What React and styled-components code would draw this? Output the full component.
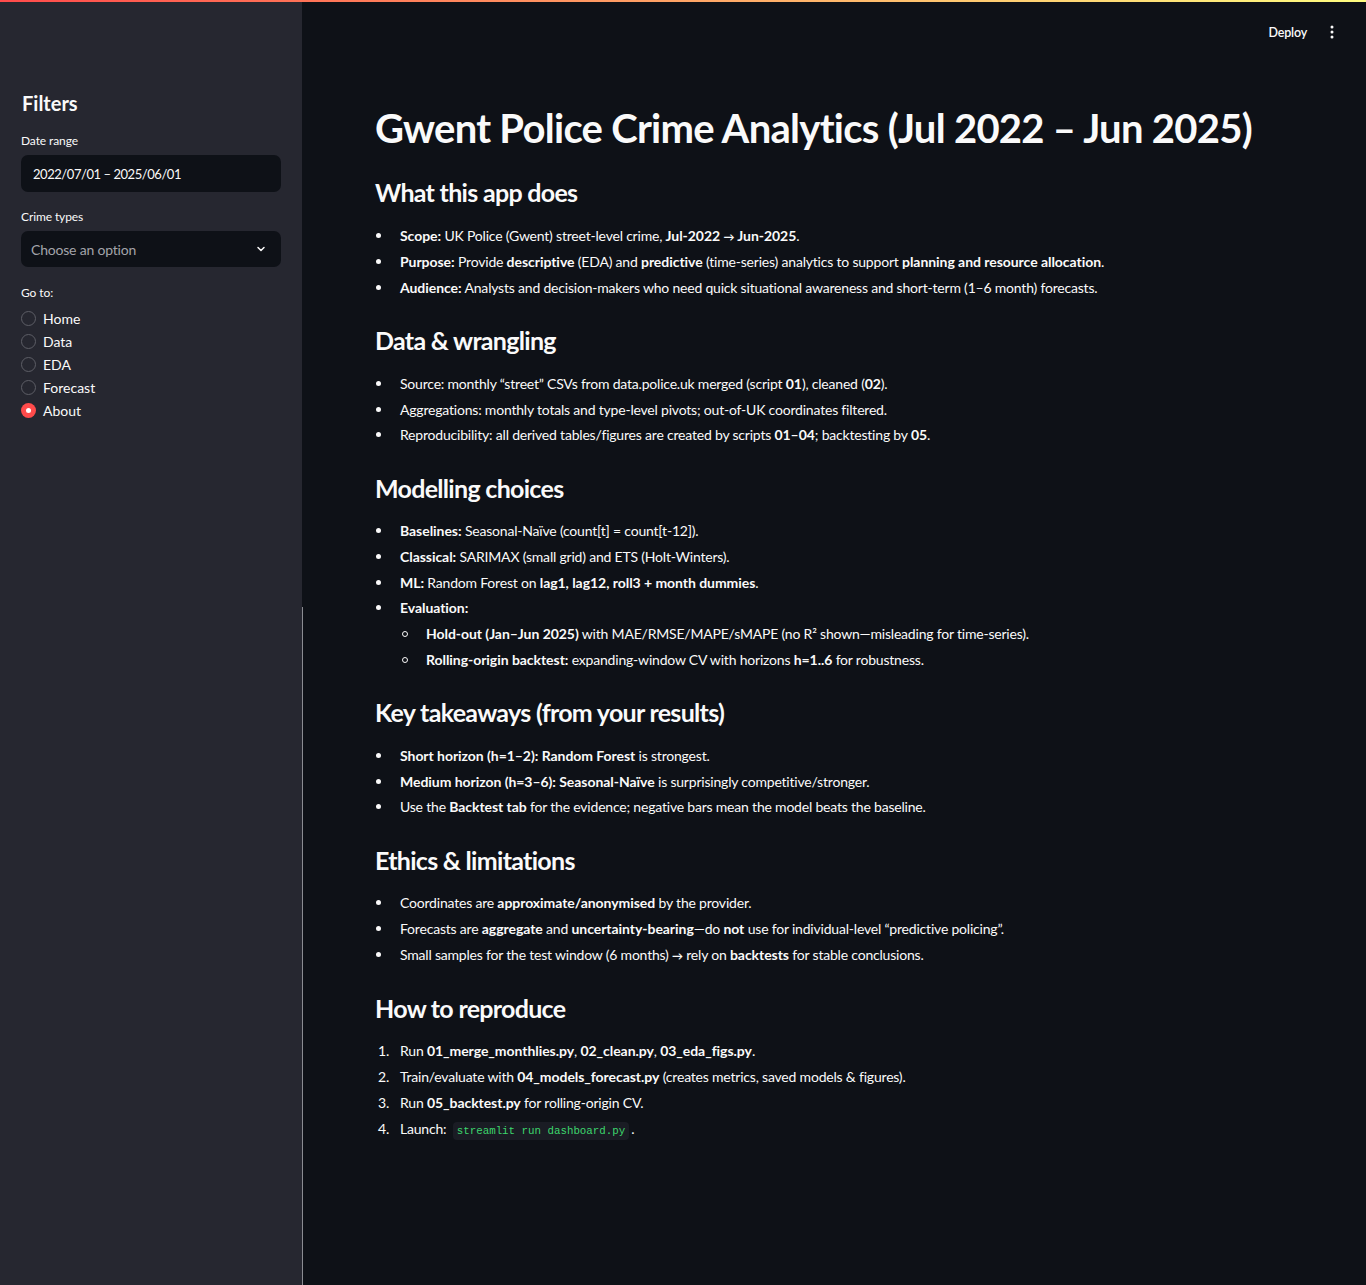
import React from "react";
import styled, { createGlobalStyle } from "styled-components";

const FONT = `Lato, "Noto Sans", sans-serif`;

const Global = createGlobalStyle`
  html, body { margin: 0; padding: 0; background: #0e1117; }
  body { font-family: ${FONT}; color: #fafafa; }
  * { box-sizing: border-box; }
`;

const Page = styled.div`
  position: relative;
  display: flex;
  min-height: 1285px;
  background: #0e1117;
`;

const Decoration = styled.div`
  position: absolute;
  top: 0;
  left: 0;
  right: 0;
  height: 2px;
  background: linear-gradient(90deg, #ff4b4b, #fffd80);
  z-index: 5;
`;

const Sidebar = styled.aside`
  position: relative;
  width: 302px;
  flex: none;
  background: #262730;
  padding: 88px 21px 0 21px;
`;

const ScrollThumb = styled.div`
  position: absolute;
  right: -1px;
  top: 607px;
  bottom: 0;
  width: 1px;
  background: #8b8c92;
`;

const SideTitle = styled.h2`
  margin: 0 0 15px 1px;
  font-size: 20px;
  line-height: 30px;
  font-weight: 700;
`;

const Label = styled.div`
  font-size: 12px;
  line-height: 16px;
  margin: 0 0 6px 0;
  color: #fafafa;
  letter-spacing: -0.1px;
`;

const Field = styled.div`
  display: flex;
  align-items: center;
  justify-content: space-between;
  height: ${(p) => p.$h || 37}px;
  background: #0e1117;
  border-radius: 7px;
  padding: 0 14px 0 ${(p) => (p.$placeholder ? 10 : 12)}px;
  font-size: ${(p) => (p.$placeholder ? 14 : 13)}px;
  letter-spacing: ${(p) => (p.$placeholder ? -0.2 : -0.45)}px;
  color: ${(p) => (p.$placeholder ? "#a3a4aa" : "#fafafa")};
  margin-bottom: ${(p) => (p.$placeholder ? 18 : 17)}px;
`;

const RadioGroup = styled.div`
  display: flex;
  flex-direction: column;
  gap: 5px;
  margin-top: 8px;
`;

const RadioRow = styled.div`
  display: flex;
  align-items: center;
  gap: 7px;
  height: 18px;
  font-size: 14px;
`;

const RadioCircle = styled.span`
  width: 15px;
  height: 15px;
  border-radius: 50%;
  flex: none;
  display: flex;
  align-items: center;
  justify-content: center;
  border: ${(p) => (p.$on ? "none" : "1.5px solid #5d5e66")};
  background: ${(p) => (p.$on ? "#ff4b4b" : "transparent")};
  &::after {
    content: "";
    display: ${(p) => (p.$on ? "block" : "none")};
    width: 5px;
    height: 5px;
    border-radius: 50%;
    background: #fff;
  }
`;

const Main = styled.main`
  flex: 1;
  display: flex;
  flex-direction: column;
`;

const Header = styled.header`
  height: 60px;
  display: flex;
  align-items: center;
  justify-content: flex-end;
  padding: 4px 32px 0 0;
  gap: 23px;
`;

const DeployBtn = styled.span`
  font-size: 12.5px;
  font-weight: 600;
  letter-spacing: -0.2px;
  color: #fafafa;
`;

const Content = styled.div`
  padding: 44px 40px 80px 73px;
`;

const H1 = styled.h1`
  margin: 0 0 24px 0;
  font-size: 40px;
  line-height: 48px;
  font-weight: 700;
  letter-spacing: -0.72px;
`;

const H2 = styled.h2`
  margin: 0 0 16.5px 0;
  font-size: 25px;
  line-height: 32px;
  font-weight: 700;
  letter-spacing: -0.7px;
`;

const List = styled.ul`
  list-style: none;
  margin: 0 0 26.2px 0;
  padding: 0;
`;

const SubList = styled.ul`
  list-style: none;
  margin: 4.8px 0 0 0;
  padding: 0;
`;

const Item = styled.li`
  display: flex;
  flex-wrap: wrap;
  font-size: 14px;
  line-height: 21px;
  margin-bottom: 4.8px;
  &:last-child { margin-bottom: 0; }
`;

const Marker = styled.span`
  width: 25px;
  flex: none;
  display: flex;
  align-items: center;
  height: 21px;
  padding-left: ${(p) => (p.$kind === "num" ? 3 : 1)}px;
  font-size: 14px;
`;

const Dot = styled.span`
  width: ${(p) => (p.$hollow ? 6 : 5)}px;
  height: ${(p) => (p.$hollow ? 6 : 5)}px;
  border-radius: 50%;
  background: ${(p) => (p.$hollow ? "transparent" : "#fafafa")};
  border: ${(p) => (p.$hollow ? "1px solid #fafafa" : "none")};
`;

const Body = styled.span`
  flex: 1;
  min-width: 0;
  letter-spacing: -0.2px;
`;

const Nested = styled.div`
  flex-basis: 100%;
  padding-left: 26px;
`;

const B = styled.strong`
  font-weight: 700;
  letter-spacing: -0.05px;
`;

const Arrow = styled.span`
  font-size: 11px;
  font-weight: 700;
`;

const Code = styled.code`
  font-family: "Liberation Mono", "DejaVu Sans Mono", monospace;
  font-size: 10.8px;
  letter-spacing: 0;
  color: #3dd56d;
  background: #1a1c24;
  border-radius: 4px;
  padding: 3px 4px;
  margin: 0 2px 0 3px;
`;

function Bullet({ kind = "disc", n, children, sub }) {
  return (
    <Item>
      <Marker $kind={kind}>
        {kind === "num" ? `${n}.` : <Dot $hollow={kind === "circle"} />}
      </Marker>
      <Body>{children}</Body>
      {sub && <Nested>{sub}</Nested>}
    </Item>
  );
}

function Chevron() {
  return (
    <svg width="12" height="12" viewBox="0 0 24 24" fill="none" stroke="#fafafa" strokeWidth="3" strokeLinecap="round" strokeLinejoin="round">
      <polyline points="6 9 12 15 18 9" />
    </svg>
  );
}

function Kebab() {
  return (
    <svg width="4" height="14" viewBox="0 0 4 14" fill="#fafafa">
      <circle cx="2" cy="2" r="1.5" />
      <circle cx="2" cy="7" r="1.5" />
      <circle cx="2" cy="12" r="1.5" />
    </svg>
  );
}

const pages = ["Home", "Data", "EDA", "Forecast", "About"];

export default function App() {
  return (
    <>
      <Global />
      <Page>
        <Decoration />
        <Sidebar>
          <SideTitle>Filters</SideTitle>
          <Label>Date range</Label>
          <Field>2022/07/01 – 2025/06/01</Field>
          <Label>Crime types</Label>
          <Field $placeholder $h={36}>
            <span>Choose an option</span>
            <Chevron />
          </Field>
          <Label>Go to:</Label>
          <RadioGroup>
            {pages.map((p) => (
              <RadioRow key={p}>
                <RadioCircle $on={p === "About"} />
                <span>{p}</span>
              </RadioRow>
            ))}
          </RadioGroup>
          <ScrollThumb />
        </Sidebar>
        <Main>
          <Header>
            <DeployBtn>Deploy</DeployBtn>
            <Kebab />
          </Header>
          <Content>
            <H1>Gwent Police Crime Analytics (Jul 2022 – Jun 2025)</H1>

            <H2>What this app does</H2>
            <List>
              <Bullet><B>Scope:</B> UK Police (Gwent) street-level crime, <B>Jul-2022 <Arrow>→</Arrow> Jun-2025</B>.</Bullet>
              <Bullet><B>Purpose:</B> Provide <B>descriptive</B> (EDA) and <B>predictive</B> (time-series) analytics to support <B>planning and resource allocation</B>.</Bullet>
              <Bullet><B>Audience:</B> Analysts and decision-makers who need quick situational awareness and short-term (1–6 month) forecasts.</Bullet>
            </List>

            <H2>Data &amp; wrangling</H2>
            <List>
              <Bullet>Source: monthly “street” CSVs from data.police.uk merged (script <B>01</B>), cleaned (<B>02</B>).</Bullet>
              <Bullet>Aggregations: monthly totals and type-level pivots; out-of-UK coordinates filtered.</Bullet>
              <Bullet>Reproducibility: all derived tables/figures are created by scripts <B>01–04</B>; backtesting by <B>05</B>.</Bullet>
            </List>

            <H2>Modelling choices</H2>
            <List>
              <Bullet><B>Baselines:</B> Seasonal-Naïve (count[t] = count[t-12]).</Bullet>
              <Bullet><B>Classical:</B> SARIMAX (small grid) and ETS (Holt-Winters).</Bullet>
              <Bullet><B>ML:</B> Random Forest on <B>lag1, lag12, roll3 + month dummies</B>.</Bullet>
              <Bullet
                sub={
                  <SubList>
                    <Bullet kind="circle"><B>Hold-out (Jan–Jun 2025)</B> with MAE/RMSE/MAPE/sMAPE (no R² shown—misleading for time-series).</Bullet>
                    <Bullet kind="circle"><B>Rolling-origin backtest:</B> expanding-window CV with horizons <B>h=1..6</B> for robustness.</Bullet>
                  </SubList>
                }
              >
                <B>Evaluation:</B>
              </Bullet>
            </List>

            <H2>Key takeaways (from your results)</H2>
            <List>
              <Bullet><B>Short horizon (h=1–2): Random Forest</B> is strongest.</Bullet>
              <Bullet><B>Medium horizon (h=3–6): Seasonal-Naïve</B> is surprisingly competitive/stronger.</Bullet>
              <Bullet>Use the <B>Backtest tab</B> for the evidence; negative bars mean the model beats the baseline.</Bullet>
            </List>

            <H2>Ethics &amp; limitations</H2>
            <List>
              <Bullet>Coordinates are <B>approximate/anonymised</B> by the provider.</Bullet>
              <Bullet>Forecasts are <B>aggregate</B> and <B>uncertainty-bearing</B>—do <B>not</B> use for individual-level “predictive policing”.</Bullet>
              <Bullet>Small samples for the test window (6 months) <Arrow>→</Arrow> rely on <B>backtests</B> for stable conclusions.</Bullet>
            </List>

            <H2>How to reproduce</H2>
            <List>
              <Bullet kind="num" n={1}>Run <B>01_merge_monthlies.py</B>, <B>02_clean.py</B>, <B>03_eda_figs.py</B>.</Bullet>
              <Bullet kind="num" n={2}>Train/evaluate with <B>04_models_forecast.py</B> (creates metrics, saved models &amp; figures).</Bullet>
              <Bullet kind="num" n={3}>Run <B>05_backtest.py</B> for rolling-origin CV.</Bullet>
              <Bullet kind="num" n={4}>Launch: <Code>streamlit run dashboard.py</Code>.</Bullet>
            </List>
          </Content>
        </Main>
      </Page>
    </>
  );
}
